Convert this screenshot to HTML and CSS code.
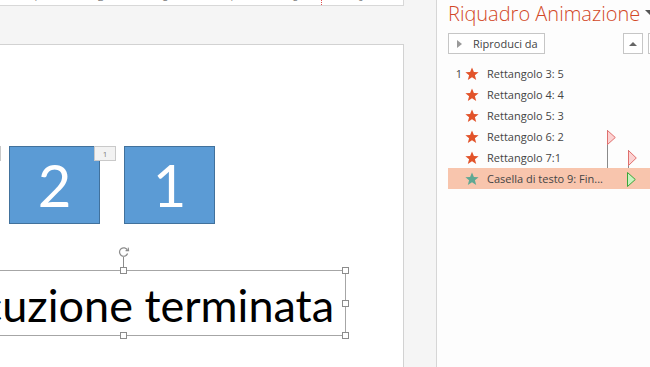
FILE: index.html
```html
<!DOCTYPE html>
<html lang="it">
<head>
    <meta charset="UTF-8">
    <meta name="viewport" content="width=device-width, initial-scale=1.0">
    <title>Riquadro Animazione</title>
    <link rel="stylesheet" href="styles.css">
</head>
<body>
    <div class="app">
        <div class="editor">
            <div class="ruler">
                <span>1</span><span>2</span><span>3</span><span>4</span><span>5</span><span>6</span>
                <i class="ruler-mark"></i>
            </div>
            <div class="slide">
                <div class="tag tag-cut">2</div>
                <div class="shape shape-2">2</div>
                <div class="tag tag-1">1</div>
                <div class="shape shape-1">1</div>
                <div class="textbox">
                    <span class="rotate-line"></span>
                    <svg class="rotate" width="12" height="12" viewBox="0 0 12 12">
                        <path d="M9.5 4.2 A4.2 4.2 0 1 0 9.6 7.6" fill="none" stroke="#8c8c8c" stroke-width="1.2"/>
                        <path d="M7.6 4.6 L10.6 4.6 L10.2 1.6" fill="none" stroke="#8c8c8c" stroke-width="1.1"/>
                    </svg>
                    <span class="handle h-tm"></span>
                    <span class="handle h-tr"></span>
                    <span class="handle h-mr"></span>
                    <span class="handle h-bm"></span>
                    <span class="handle h-br"></span>
                    Esecuzione terminata
                </div>
            </div>
        </div>

        <div class="panel">
            <div class="panel-title">Riquadro Animazione<span class="caret"></span></div>
            <div class="toolbar">
                <button class="play-btn"><span class="play-icon"></span>Riproduci da</button>
                <button class="arrow-btn"><span class="up-icon"></span></button>
                <button class="arrow-btn"></button>
            </div>
            <ul class="anim-list">
                <li>
                    <span class="num">1</span>
                    <svg class="star" viewBox="0 0 14 14"><polygon points="7,0.5 8.9,5 13.6,5.2 9.9,8.2 11.2,13 7,10.3 2.8,13 4.1,8.2 0.4,5.2 5.1,5"/></svg>
                    <span class="label">Rettangolo 3: 5</span>
                </li>
                <li>
                    <span class="num"></span>
                    <svg class="star" viewBox="0 0 14 14"><polygon points="7,0.5 8.9,5 13.6,5.2 9.9,8.2 11.2,13 7,10.3 2.8,13 4.1,8.2 0.4,5.2 5.1,5"/></svg>
                    <span class="label">Rettangolo 4: 4</span>
                </li>
                <li>
                    <span class="num"></span>
                    <svg class="star" viewBox="0 0 14 14"><polygon points="7,0.5 8.9,5 13.6,5.2 9.9,8.2 11.2,13 7,10.3 2.8,13 4.1,8.2 0.4,5.2 5.1,5"/></svg>
                    <span class="label">Rettangolo 5: 3</span>
                </li>
                <li>
                    <span class="num"></span>
                    <svg class="star" viewBox="0 0 14 14"><polygon points="7,0.5 8.9,5 13.6,5.2 9.9,8.2 11.2,13 7,10.3 2.8,13 4.1,8.2 0.4,5.2 5.1,5"/></svg>
                    <span class="label">Rettangolo 6: 2</span>
                    <span class="timing t-row4">
                        <svg width="9" height="15" viewBox="0 0 9 15"><polygon points="0.5,0.5 8.3,7.5 0.5,14.5" fill="#fcd2d2" stroke="#e0706e"/></svg>
                    </span>
                </li>
                <li>
                    <span class="num"></span>
                    <svg class="star" viewBox="0 0 14 14"><polygon points="7,0.5 8.9,5 13.6,5.2 9.9,8.2 11.2,13 7,10.3 2.8,13 4.1,8.2 0.4,5.2 5.1,5"/></svg>
                    <span class="label">Rettangolo 7:1</span>
                    <span class="timing t-row5">
                        <svg width="9" height="16" viewBox="0 0 9 16"><polygon points="0.5,0.5 8.3,8 0.5,15.5" fill="#fcd2d2" stroke="#e0706e"/></svg>
                    </span>
                </li>
                <li class="selected">
                    <span class="num"></span>
                    <svg class="star star-text" viewBox="0 0 14 14"><polygon points="7,0.5 8.9,5 13.6,5.2 9.9,8.2 11.2,13 7,10.3 2.8,13 4.1,8.2 0.4,5.2 5.1,5"/></svg>
                    <span class="label">Casella di testo 9: Fin...</span>
                    <span class="timing t-row6">
                        <svg width="9" height="15" viewBox="0 0 9 15"><polygon points="0.5,0.5 8.3,7.5 0.5,14.5" fill="#c9f2bf" stroke="#3aa53a"/></svg>
                    </span>
                </li>
            </ul>
        </div>
    </div>
</body>
</html>
```

FILE: styles.css
```css
body {
    margin: 0;
    font-family: "Open Sans", sans-serif;
    background: #f4f4f4;
    overflow: hidden;
}

.app {
    display: flex;
    height: 367px;
    width: 650px;
}

/* area di modifica */
.editor {
    width: 436px;
    flex: none;
    display: flex;
    flex-direction: column;
    background: #f5f5f5;
    border-right: 1px solid #d6d6d6;
}

.ruler {
    position: relative;
    width: 404px;
    height: 6px;
    background: #fff;
    border-bottom: 1px solid #d8d8d8;
    border-right: 1px solid #d8d8d8;
    display: flex;
    padding-left: 3px;
    box-sizing: border-box;
    overflow: hidden;
}

.ruler span {
    width: 65px;
    flex: none;
    text-align: center;
    font-size: 10px;
    line-height: 10px;
    margin-top: -8px;
    color: #888;
}

.ruler-mark {
    position: absolute;
    left: 321px;
    top: 0;
    height: 5px;
    border-left: 1px dotted #e05050;
}

.slide {
    position: relative;
    flex: 1;
    width: 403px;
    margin-top: 38px;
    background: #fff;
    border-top: 1px solid #d2d2d2;
    border-right: 1px solid #d2d2d2;
    overflow: hidden;
}

.shape {
    position: absolute;
    top: 101px;
    width: 91px;
    height: 78px;
    box-sizing: border-box;
    background: #5b9bd5;
    border: 1px solid #41719c;
    color: #fff;
    font-family: Lato, sans-serif;
    font-size: 58px;
    line-height: 76px;
    text-align: center;
}

.shape-2 { left: 9px; }
.shape-1 { left: 124px; }

.tag {
    position: absolute;
    top: 101px;
    width: 22px;
    height: 15px;
    box-sizing: border-box;
    background: #f2f2f2;
    border: 1px solid #c9c9c9;
    color: #808080;
    font-size: 8px;
    line-height: 13px;
    text-align: center;
    z-index: 2;
}

.tag-1 { left: 94px; }
.tag-cut { left: -21px; }

.textbox {
    position: absolute;
    left: -100px;
    top: 225px;
    width: 446px;
    height: 66px;
    box-sizing: border-box;
    border: 1px solid #a6a6a6;
    font-family: Lato, sans-serif;
    font-size: 45px;
    line-height: 69px;
    text-align: center;
    color: #000;
}

.rotate-line {
    position: absolute;
    left: 222px;
    top: -14px;
    height: 13px;
    border-left: 1px solid #8c8c8c;
}

.rotate {
    position: absolute;
    left: 217px;
    top: -25px;
}

.handle {
    position: absolute;
    width: 7px;
    height: 7px;
    box-sizing: border-box;
    background: #fff;
    border: 1px solid #8c8c8c;
}

.h-tm { left: 219px; top: -4px; }
.h-tr { right: -4px; top: -4px; }
.h-mr { right: -4px; top: 29px; }
.h-bm { left: 219px; bottom: -4px; }
.h-br { right: -4px; bottom: -4px; }

/* riquadro animazione */
.panel {
    width: 213px;
    flex: none;
    background: #fdfdfd;
    padding-left: 11px;
    box-sizing: border-box;
    overflow: hidden;
}

.panel-title {
    font-size: 20px;
    font-weight: 300;
    line-height: 27px;
    color: #d24726;
    white-space: nowrap;
    position: relative;
}

.caret {
    position: absolute;
    left: 197px;
    top: 10px;
    border-left: 5px solid transparent;
    border-right: 5px solid transparent;
    border-top: 5px solid #555;
}

.toolbar {
    display: flex;
    margin-top: 6px;
    height: 21px;
}

.toolbar button {
    flex: none;
    height: 21px;
    box-sizing: border-box;
    background: #fff;
    border: 1px solid #c6c6c6;
    padding: 0;
    font-family: "Open Sans", sans-serif;
    color: #444;
    white-space: nowrap;
}

.play-btn {
    width: 97px;
    display: flex;
    align-items: center;
    font-size: 11px;
}

.play-icon {
    width: 0;
    height: 0;
    margin: 0 11px 0 8px;
    border-top: 4px solid transparent;
    border-bottom: 4px solid transparent;
    border-left: 5px solid #9a9a9a;
}

.arrow-btn {
    width: 20px;
    margin-left: 78px;
    display: flex;
    align-items: center;
    justify-content: center;
}

.arrow-btn + .arrow-btn {
    margin-left: 5px;
}

.up-icon {
    border-left: 4px solid transparent;
    border-right: 4px solid transparent;
    border-bottom: 4px solid #666;
}

.anim-list {
    list-style: none;
    margin: 9px 0 0;
    padding: 0;
}

.anim-list li {
    position: relative;
    height: 21px;
    display: flex;
    align-items: center;
    font-size: 11px;
    color: #444;
    white-space: nowrap;
}

.anim-list li.selected {
    background: #f8c5ad;
}

.num {
    width: 14px;
    text-align: right;
}

.star {
    width: 14px;
    height: 14px;
    margin-left: 3px;
    fill: #e2532a;
}

.star-text {
    fill: #5fa893;
}

.label {
    margin-left: 8px;
}

.timing {
    position: absolute;
    top: 4px;
    border-left: 1px solid #8a8a8a;
    display: flex;
}

.timing svg {
    margin-left: -1px;
}

.t-row4 { left: 159px; height: 38px; }
.t-row5 { left: 180px; top: 3px; height: 18px; }
.t-row6 { left: 179px; border-left: 0; }
.t-row6 svg { margin-left: 0; }
```
